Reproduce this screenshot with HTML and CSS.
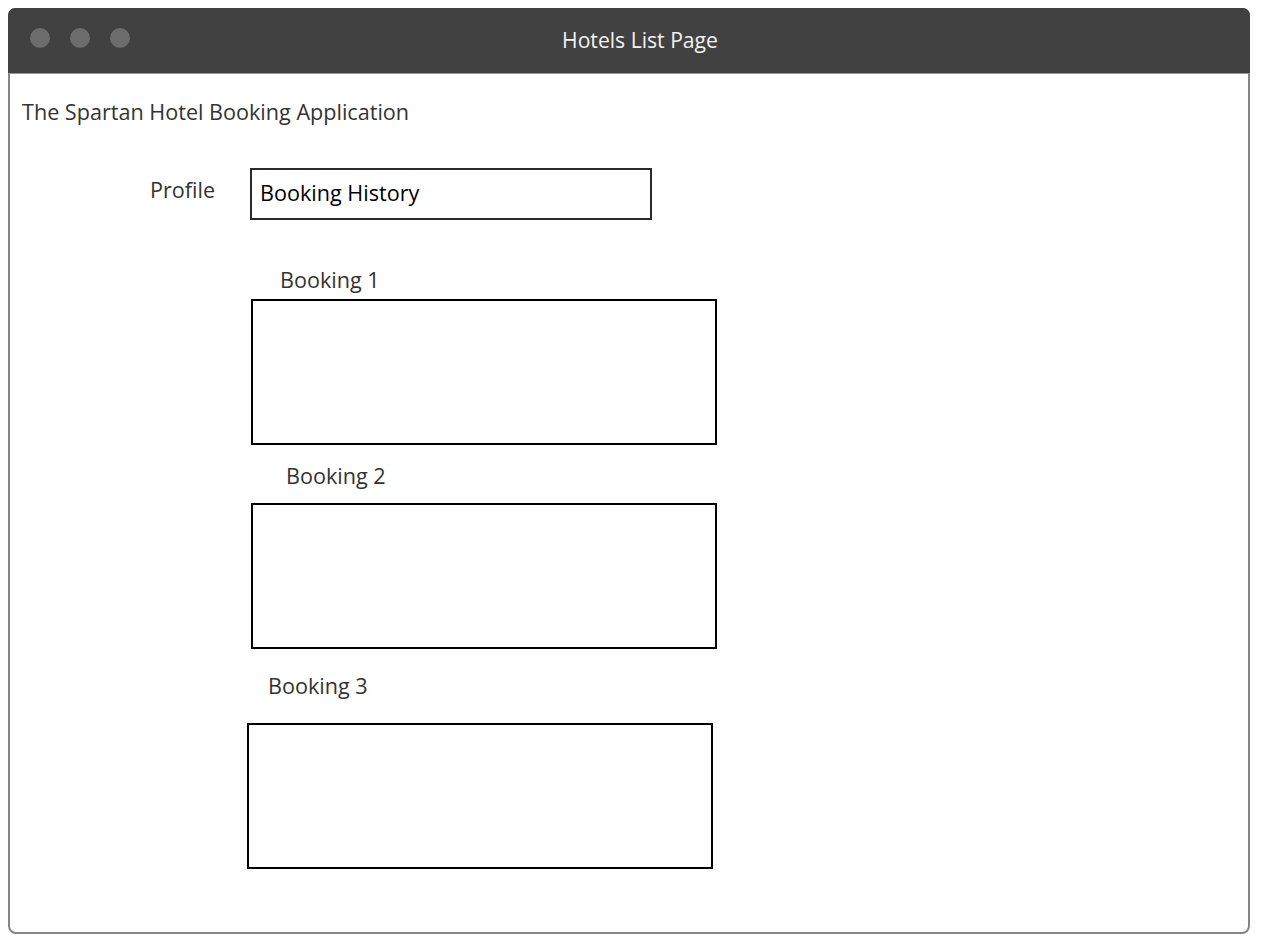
FILE: index.html
```html
<!DOCTYPE html>
<html>
<head>
<meta charset="utf-8">
<title>Hotels List Page</title>
<link rel="stylesheet" href="styles.css">
</head>
<body>
<div class="window">
  <div class="titlebar">
    <div class="dots">
      <span class="dot"></span>
      <span class="dot"></span>
      <span class="dot"></span>
    </div>
    <div class="title">Hotels List Page</div>
  </div>
  <div class="content">
    <div class="app-name">The Spartan Hotel Booking Application</div>
    <div class="profile-row">
      <div class="profile-label">Profile</div>
      <div class="field">Booking History</div>
    </div>
    <div class="booking booking-1">
      <div class="booking-label">Booking 1</div>
      <div class="booking-box"></div>
    </div>
    <div class="booking booking-2">
      <div class="booking-label">Booking 2</div>
      <div class="booking-box"></div>
    </div>
    <div class="booking booking-3">
      <div class="booking-label">Booking 3</div>
      <div class="booking-box"></div>
    </div>
  </div>
</div>
</body>
</html>
```
FILE: styles.css
```css
* { box-sizing: border-box; }

html, body {
  margin: 0;
  padding: 0;
  background: #ffffff;
}

body {
  padding: 8px;
  font-family: "Open Sans", "Noto Sans", sans-serif;
  font-size: 21.6px;
  line-height: 24px;
  color: #333333;
}

.window {
  width: 1242px;
  height: 926px;
  border: 2px solid #858585;
  border-radius: 8px;
  background: #ffffff;
}

.titlebar {
  display: grid;
  grid-template-columns: 1fr;
  height: 66px;
  margin: -2px -2px 0 -2px;
  background: #414141;
  border-bottom: 1px solid #9a9a9a;
  border-radius: 7px 7px 0 0;
}

.dots {
  grid-area: 1 / 1;
  align-self: start;
  display: flex;
  gap: 20px;
  margin: 20px 0 0 22px;
}

.dot {
  width: 20px;
  height: 20px;
  border-radius: 50%;
  background: #6d6d6d;
}

.title {
  grid-area: 1 / 1;
  align-self: start;
  margin-top: 20px;
  padding-left: 22px;
  text-align: center;
  font-size: 21.15px;
  color: #f2f2f2;
}

.content {
  padding: 26px 12px 0 12px;
}

.app-name {
  color: #333333;
}

.profile-row {
  display: flex;
  align-items: flex-start;
  margin: 44px 0 0 128px;
}

.profile-label {
  width: 100px;
  padding-top: 10px;
  color: #333333;
}

.field {
  width: 402px;
  height: 52px;
  padding: 11px 8px 0 8px;
  border: 2px solid #2a2a2a;
  color: #000000;
}

.booking-label {
  color: #333333;
}

.booking-box {
  width: 466px;
  height: 146px;
  border: 2px solid #000000;
}

.booking-1 { margin-top: 48px; }
.booking-1 .booking-label { margin-left: 258px; }
.booking-1 .booking-box { margin: 7px 0 0 229px; }

.booking-2 { margin-top: 19px; }
.booking-2 .booking-label { margin-left: 264px; }
.booking-2 .booking-box { margin: 15px 0 0 229px; }

.booking-3 { margin-top: 25px; }
.booking-3 .booking-label { margin-left: 246px; }
.booking-3 .booking-box { margin: 25px 0 0 225px; }
```
